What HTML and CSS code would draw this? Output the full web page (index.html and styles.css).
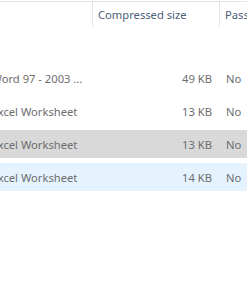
FILE: index.html
```html
<!DOCTYPE html>
<html lang="en">
<head>
    <meta charset="UTF-8">
    <title>Compressed files</title>
    <link rel="stylesheet" href="styles.css">
</head>
<body>

<div class="file-list">
    <!-- Spaltenkoepfe (Typ-Spalte ist nach links weggescrollt) -->
    <div class="list-header">
        <div class="col col-type"></div>
        <div class="col col-size">Compressed size</div>
        <div class="col col-pass">Password protected</div>
    </div>

    <!-- Dateien -->
    <div class="list-rows">
        <div class="row">
            <div class="cell cell-type">Microsoft Word 97 - 2003 ...</div>
            <div class="cell cell-size">49 KB</div>
            <div class="cell cell-pass">No</div>
        </div>
        <div class="row">
            <div class="cell cell-type">Microsoft Excel Worksheet</div>
            <div class="cell cell-size">13 KB</div>
            <div class="cell cell-pass">No</div>
        </div>
        <div class="row row-selected">
            <div class="cell cell-type">Microsoft Excel Worksheet</div>
            <div class="cell cell-size">13 KB</div>
            <div class="cell cell-pass">No</div>
        </div>
        <div class="row row-hover">
            <div class="cell cell-type">Microsoft Excel Worksheet</div>
            <div class="cell cell-size">14 KB</div>
            <div class="cell cell-pass">No</div>
        </div>
    </div>
</div>

</body>
</html>
```

FILE: styles.css
```css
body {
    margin: 0;
    background-color: #ffffff;
    font-family: "Noto Sans", "Open Sans", sans-serif;
    font-size: 11.2px;
    overflow: hidden;
}

.file-list {
    width: 247px;
    height: 296px;
    overflow: hidden;
    padding-top: 1px;
    box-sizing: border-box;
}

/* erste Spalte ist nach links weggescrollt */
.list-header,
.row {
    display: grid;
    grid-template-columns: 160px 127px 200px;
    margin-left: -67px;
}

.list-header {
    border-top: 1px solid #e5e5e5;
    height: 25px;
}

.col {
    display: flex;
    align-items: center;
    padding-left: 5px;
    color: #4c607a;
    white-space: nowrap;
    overflow: hidden;
}

.col-type,
.col-size {
    border-right: 1px solid #e5e5e5;
}

.list-rows {
    display: flex;
    flex-direction: column;
    gap: 5px;
    margin-top: 37px;
}

.row {
    height: 28px;
    align-items: center;
    color: #6d6d6d;
}

.row-selected {
    background-color: #d9d9d9;
}

.row-hover {
    background-color: #e5f3ff;
}

.cell {
    white-space: nowrap;
    overflow: hidden;
}

.cell-type {
    padding-left: 6px;
}

.cell-size {
    text-align: right;
    padding-right: 8px;
}

.cell-pass {
    padding-left: 6px;
}
```
